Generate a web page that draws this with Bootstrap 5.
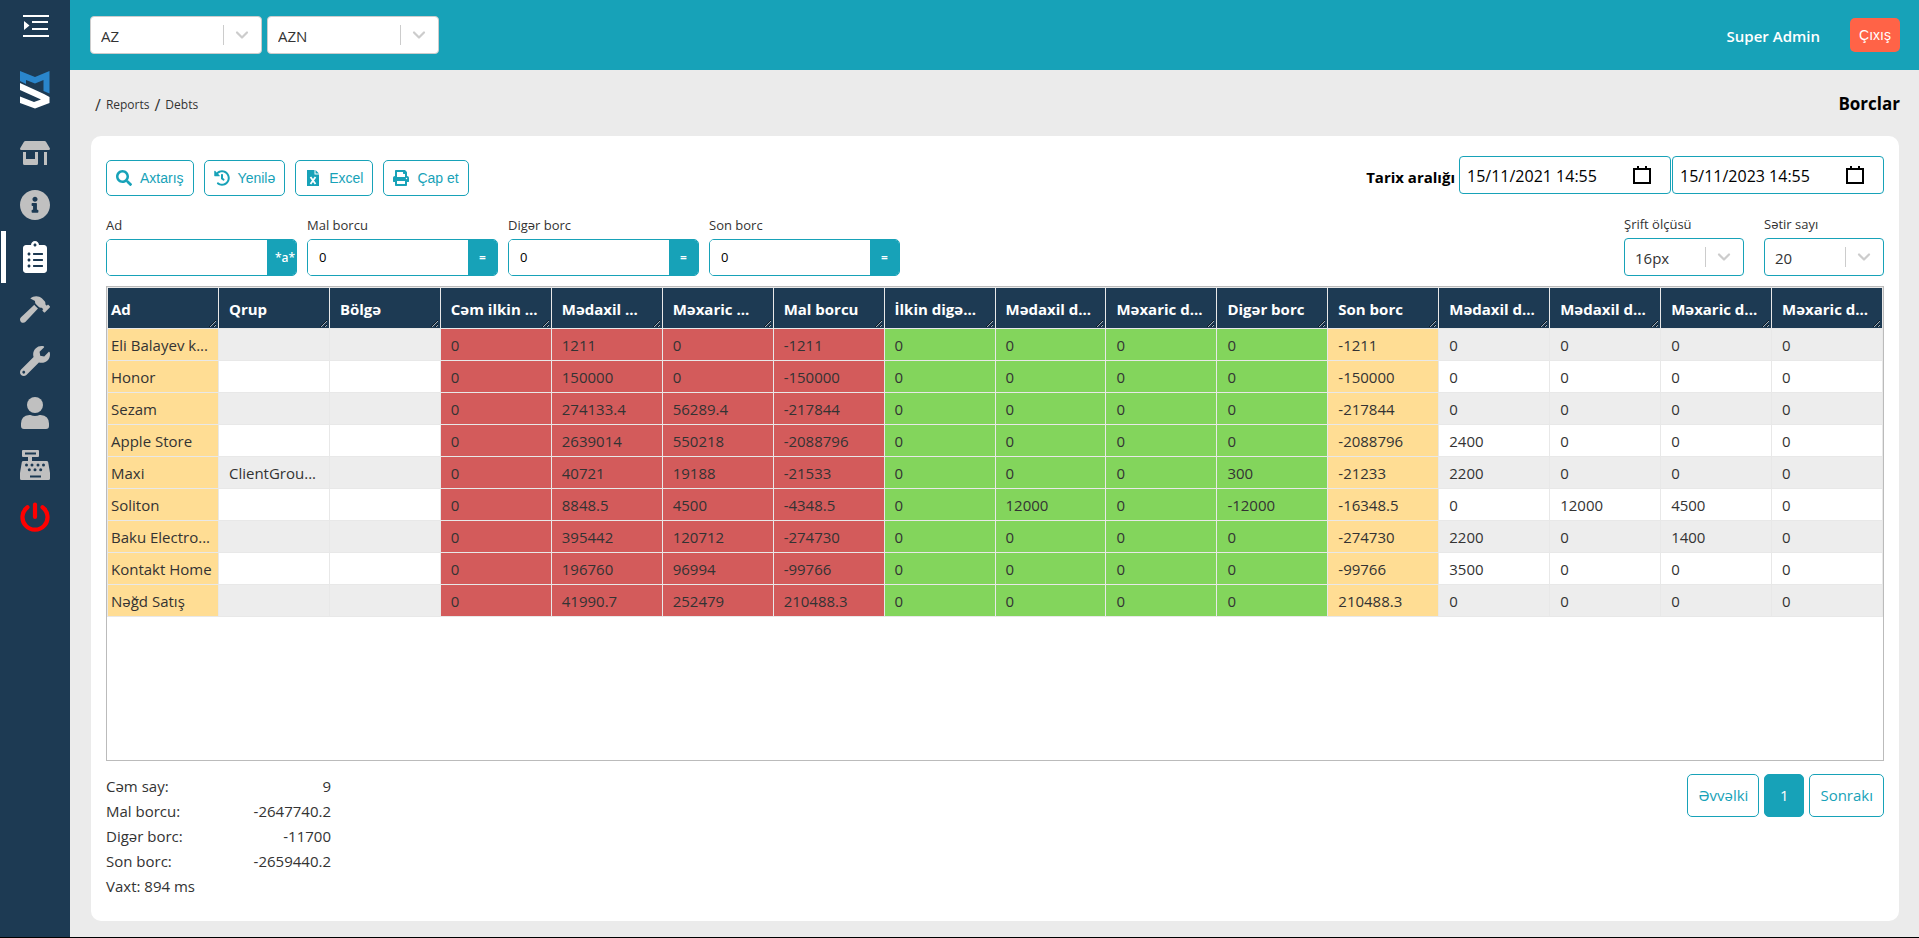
<!DOCTYPE html>
<html lang="az">
<head>
<meta charset="utf-8">
<meta name="viewport" content="width=device-width, initial-scale=1">
<title>Borclar</title>
<link href="https://cdn.jsdelivr.net/npm/bootstrap@5.3.0/dist/css/bootstrap.min.css" rel="stylesheet">
<style>
  :root { --teal: #17a2b8; --navy: #1d3a53; }
  body { background: #ebebeb; color: #333; font-family: "Open Sans", "Noto Sans", sans-serif; font-size: 15px; }
  a { text-decoration: none; color: inherit; }
  .shell { border-bottom: 1px solid #000; }
  .work { min-width: 0; }

  .side { width: 70px; background: var(--navy); color: #c0c0c0; }
  .side-toggle { height: 53px; padding: 14px 0 0 2px; color: #fff; }
  .side-logo { height: 74px; padding-top: 18px; }
  .side-link { height: 52px; }
  .side-link.active { color: #fff; border-left: 5px solid #fff; margin-left: 1px; padding-right: 6px; }
  .side-link.power { color: red; }

  .topbar { height: 70px; background: var(--teal); padding: 0 19px 0 20px; }
  .user-name { color: #fff; font-weight: 600; font-size: 15px; margin-right: 30px; padding-top: 2px; }
  .btn-exit { background: #ff6347; color: #fff; font: 14px "Liberation Sans", Arial, sans-serif; height: 34px; width: 50px; border-radius: 5px; }

  .pick { appearance: none; height: 38px; color: #333; border: 1px solid #ccc; border-radius: 4px; padding: 2px 40px 0 10px; outline: 0;
    background: #fff url("data:image/svg+xml,%3Csvg xmlns='http://www.w3.org/2000/svg' width='38' height='36'%3E%3Cpath d='M.5 8v20' stroke='%23ccc'/%3E%3Cpath d='M14 15.500l5 5 5-5' fill='none' stroke='%23ccc' stroke-width='2.200' stroke-linecap='round' stroke-linejoin='round'/%3E%3C/svg%3E") no-repeat right center; }
  .topbar .pick { width: 172px; }
  .view-opts .pick { width: 120px; border-color: var(--teal); }

  .page-head { height: 66px; padding: 3px 19px 0 25px; }
  .crumbs { font-size: 12px; gap: 5px; }
  .crumbs .slash { font-size: 16px; }
  .page-title { font-size: 17px; font-weight: 700; color: #000; }

  .panel { background: #fff; border-radius: 10px; margin: 0 20px 16px 21px; padding: 20px 15px 22px; }
  .tools { height: 40px; }
  .btn-tool { --bs-btn-padding-x: 9px; --bs-btn-padding-y: 0; height: 36px; border: 1px solid var(--teal); color: var(--teal); border-radius: 5px; background: #fff; font: 14px "Liberation Sans", Arial, sans-serif; }
  .range-label { font-weight: 700; font-size: 15px; color: #000; padding-top: 5px; margin-right: 4px; }
  .date-box { width: 212px; height: 38px; border: 1px solid var(--teal); border-radius: 4px; padding: 0 19px 0 7px; margin-right: 1px; }
  .date-box input { border: 0; outline: 0; padding: 2px 0 0; color: #000; font-size: 16px; min-width: 0; }
  .date-box button { border: 0; background: none; padding: 0; line-height: 0; }

  .field-label { font-size: 13px; font-weight: 500; line-height: 18px; margin-bottom: 5px; }
  .filters { margin-top: 19px; }
  .filter { width: 191px; height: 37px; border: 1px solid var(--teal); border-radius: 5px; overflow: hidden; }
  .filter input { border: 0; outline: 0; padding: 0 11px; font-size: 13px; color: #000; min-width: 0; }
  .filter button { width: 29px; border: 0; background: var(--teal); color: #fff; font-size: 12px; font-weight: 600; padding: 0; text-align: center; flex: none; }
  .filter .mode-text { padding-left: 8px; text-align: left; }

  .grid-box { border: 1px solid #bbb; margin-top: 10px; overflow: hidden; }
  .grid-table { table-layout: fixed; width: 100%; border-collapse: collapse; font-size: 15px; }
  .grid-table th, .grid-table td { border: 1px solid #e8e8e8; padding: 0; }
  .grid-table td { height: 32px; padding: 2px 0 0 10px; white-space: nowrap; overflow: hidden; }
  .grid-table th { background: var(--navy); color: #fff; font-size: 15px; font-weight: 700; }
  .col-grip { height: 40px; line-height: 42px; padding-left: 10px; padding-right: 2px; resize: horizontal; overflow: hidden; white-space: nowrap; margin-right: 1px; }
  .grid-table td:first-child, .grid-table th:first-child .col-grip { padding-left: 3px; }
  .grid-table tbody tr:nth-child(odd) td { background: #ededed; }
  .grid-table tbody tr td:is(:nth-child(1), :nth-child(12)) { background: #ffdd94; }
  .grid-table tbody tr td:is(:nth-child(4), :nth-child(5), :nth-child(6), :nth-child(7)) { background: #d35b5b; }
  .grid-table tbody tr td:is(:nth-child(8), :nth-child(9), :nth-child(10), :nth-child(11)) { background: #83d55c; }

  .totals { width: 225px; line-height: 25px; }
  .foot { padding-top: 13px; }
  .btn-page { height: 43px; border: 1px solid var(--teal); border-radius: 5px; color: var(--teal); background: #fff; font-size: 15px; padding: 0 10px; }
  .btn-page.current { background: var(--teal); color: #fff; width: 40px; }
</style>
</head>
<body>
<div class="shell d-flex min-vh-100">
  <nav class="side flex-shrink-0 d-flex flex-column" aria-label="Menu">
    <a href="#" class="side-toggle d-flex justify-content-center align-items-start" aria-label="Menu">
      <svg width="26" height="23" viewBox="0 0 26 23" fill="currentColor"><path d="M0 1h26v2H0zM9 7h16v2H9zM9 14h16v2H9zM0 21h26v2H0zM1 7l5.500 4.500L1 16z"/></svg>
    </a>
    <a href="#" class="side-logo d-flex justify-content-center align-items-start" aria-label="Logo">
      <svg width="30" height="38" viewBox="0 0 30 38"><path d="M0 0l15 6 14.500-6v22.500l-6-2.500v-11L15 12.500 6 9v4L0 10z" fill="#2a86cc"/><path d="M0 12l24 11 5.500 3v6L15 37.500 0 32v-6.500l14 5.500 7-2.500L0 19z" fill="#fff"/></svg>
    </a>
    <a href="#" class="side-link d-flex justify-content-center align-items-center" aria-label="Store">
      <svg width="30" height="24" viewBox="0 0 30 24" fill="currentColor"><path d="M5.500 0h19q1 0 1.500.8L29.700 7q.8 2-1 2H1.300Q-.5 9 .3 7L4 .8Q4.500 0 5.500 0zM3 11h3v7h9v-7h3v11.500q0 1.500-1.500 1.500h-12Q3 24 3 22.500zM24 11h3v13h-3z"/></svg>
    </a>
    <a href="#" class="side-link d-flex justify-content-center align-items-center" aria-label="Info">
      <svg width="30" height="30" viewBox="8 8 496 496" fill="currentColor"><path d="M256 8C119.043 8 8 119.083 8 256c0 136.997 111.043 248 248 248s248-111.003 248-248C504 119.083 392.957 8 256 8zm0 110c23.196 0 42 18.804 42 42s-18.804 42-42 42-42-18.804-42-42 18.804-42 42-42zm56 254c0 6.627-5.373 12-12 12h-88c-6.627 0-12-5.373-12-12v-24c0-6.627 5.373-12 12-12h12v-64h-12c-6.627 0-12-5.373-12-12v-24c0-6.627 5.373-12 12-12h64c6.627 0 12 5.373 12 12v100h12c6.627 0 12 5.373 12 12v24z"/></svg>
    </a>
    <a href="#" class="side-link active d-flex justify-content-center align-items-center" aria-label="Reports">
      <svg width="24" height="32" viewBox="0 0 384 512" fill="currentColor"><path d="M336 64h-80c0-35.300-28.700-64-64-64s-64 28.700-64 64H48C21.500 64 0 85.500 0 112v352c0 26.500 21.500 48 48 48h288c26.500 0 48-21.500 48-48V112c0-26.500-21.500-48-48-48zM96 424c-13.300 0-24-10.700-24-24s10.700-24 24-24 24 10.700 24 24-10.700 24-24 24zm0-96c-13.300 0-24-10.700-24-24s10.700-24 24-24 24 10.700 24 24-10.700 24-24 24zm0-96c-13.300 0-24-10.700-24-24s10.700-24 24-24 24 10.700 24 24-10.700 24-24 24zm96-192c13.300 0 24 10.700 24 24s-10.700 24-24 24-24-10.700-24-24 10.700-24 24-24zm128 368c0 4.400-3.600 8-8 8H168c-4.400 0-8-3.600-8-8v-16c0-4.400 3.600-8 8-8h144c4.400 0 8 3.600 8 8v16zm0-96c0 4.400-3.600 8-8 8H168c-4.400 0-8-3.600-8-8v-16c0-4.400 3.600-8 8-8h144c4.400 0 8 3.600 8 8v16zm0-96c0 4.400-3.600 8-8 8H168c-4.400 0-8-3.600-8-8v-16c0-4.400 3.600-8 8-8h144c4.400 0 8 3.600 8 8v16z"/></svg>
    </a>
    <a href="#" class="side-link d-flex justify-content-center align-items-center" aria-label="Tools">
      <svg width="30" height="27" viewBox="0 0 576 512" fill="currentColor"><path d="M571.310 193.940l-22.630-22.630c-6.250-6.250-16.380-6.250-22.630 0l-11.310 11.310-28.900-28.900c5.630-21.310.36-44.900-16.350-61.610l-45.250-45.250c-62.480-62.480-163.790-62.480-226.280 0l90.510 45.250v18.750c0 16.970 6.740 33.250 18.750 45.250l49.140 49.140c16.710 16.710 40.300 21.980 61.610 16.350l28.900 28.900-11.310 11.310c-6.250 6.250-6.250 16.380 0 22.630l22.630 22.630c6.250 6.250 16.380 6.250 22.630 0l90.510-90.510c6.230-6.240 6.230-16.370-.02-22.620zm-286.720-15.200c-3.700-3.700-6.840-7.790-9.850-11.950L19.640 404.960c-25.570 23.880-26.260 64.190-1.530 88.930s65.050 24.050 88.920-1.530l238.130-255.070c-3.960-2.910-7.900-5.870-11.440-9.410l-49.130-49.140z"/></svg>
    </a>
    <a href="#" class="side-link d-flex justify-content-center align-items-center" aria-label="Service">
      <svg width="30" height="30" viewBox="0 0 512 512" fill="currentColor"><path d="M507.730 109.100c-2.240-9.030-13.540-12.090-20.120-5.510l-74.360 74.360-67.880-11.310-11.310-67.880 74.360-74.360c6.620-6.620 3.430-17.900-5.660-20.160-47.380-11.740-99.550.91-136.580 37.930-39.640 39.640-50.550 97.100-34.050 147.200L18.740 402.760c-24.990 24.990-24.990 65.510 0 90.500 24.990 24.990 65.510 24.990 90.500 0l213.210-213.210c50.120 16.710 107.470 5.680 147.370-34.220 37.070-37.070 49.700-89.320 37.910-136.730zM64 472c-13.250 0-24-10.750-24-24 0-13.260 10.750-24 24-24s24 10.740 24 24c0 13.250-10.750 24-24 24z"/></svg>
    </a>
    <a href="#" class="side-link d-flex justify-content-center align-items-center" aria-label="User">
      <svg width="28" height="32" viewBox="0 0 28 32" fill="currentColor"><circle cx="14" cy="8" r="8"/><path d="M8.400 18h1q4.600 2 9.200 0h1q8.400.8 8.400 8.600V29q0 3-3 3H3q-3 0-3-3v-2.400Q0 18.800 8.400 18z"/></svg>
    </a>
    <a href="#" class="side-link d-flex justify-content-center align-items-center" aria-label="Cash register">
      <svg width="30" height="30" viewBox="0 0 30 30" fill="currentColor"><path fill-rule="evenodd" d="M3 0h15q1 0 1 1v5q0 1-1 1h-6v4h14.500q1.500 0 1.700 1.300L30 23v5.500q0 1.500-1.500 1.500h-27Q0 30 0 28.500V23l1.800-10.700Q2 11 3.500 11H8V7H3Q2 7 2 6V1q0-1 1-1zm2 2.500v2h11v-2zM10 25.500v2h11v-2z"/><g fill="#1d3a53"><circle cx="6.500" cy="15" r="1.500"/><circle cx="12" cy="15" r="1.500"/><circle cx="18" cy="15" r="1.500"/><circle cx="23.500" cy="15" r="1.500"/><circle cx="9.300" cy="19.700" r="1.500"/><circle cx="15" cy="19.700" r="1.500"/><circle cx="20.700" cy="19.700" r="1.500"/></g></svg>
    </a>
    <a href="#" class="side-link power d-flex justify-content-center align-items-center" aria-label="Log out">
      <svg width="30" height="30" viewBox="0 0 30 30" fill="none" stroke="currentColor" stroke-width="4.200" stroke-linecap="round"><path d="M7.500 5.200a12.500 12.500 0 1 0 15 0M15 2.500v12.500"/></svg>
    </a>
  </nav>

  <div class="work flex-grow-1 d-flex flex-column">
    <header class="topbar d-flex align-items-center">
      <div class="d-flex flex-grow-1" style="gap:5px">
        <select class="pick" aria-label="Dil"><option>AZ</option></select>
        <select class="pick" aria-label="Valyuta"><option>AZN</option></select>
      </div>
      <span class="user-name">Super Admin</span>
      <button type="button" class="btn btn-exit p-0">Çıxış</button>
    </header>

    <div class="page-head d-flex justify-content-between align-items-center flex-shrink-0">
      <nav class="crumbs d-flex align-items-center" aria-label="breadcrumb">
        <span class="slash">/</span><a href="#">Reports</a><span class="slash">/</span><a href="#">Debts</a>
      </nav>
      <h1 class="page-title m-0">Borclar</h1>
    </div>

    <main class="panel flex-grow-1 d-flex flex-column">
      <div class="tools d-flex justify-content-between">
        <div class="d-flex align-items-end" style="gap:10px">
          <button type="button" class="btn btn-tool d-flex align-items-center gap-2">
            <svg width="16" height="16" viewBox="0 0 512 512" fill="currentColor"><path d="M505 442.700L405.300 343c-4.500-4.500-10.600-7-17-7H372c27.600-35.300 44-79.700 44-128C416 93.100 322.900 0 208 0S0 93.100 0 208s93.100 208 208 208c48.300 0 92.700-16.400 128-44v16.300c0 6.400 2.500 12.500 7 17l99.700 99.700c9.400 9.400 24.600 9.400 33.900 0l28.300-28.300c9.400-9.400 9.400-24.600.1-34zM208 336c-70.700 0-128-57.200-128-128 0-70.700 57.200-128 128-128 70.700 0 128 57.200 128 128 0 70.700-57.200 128-128 128z"/></svg>Axtarış</button>
          <button type="button" class="btn btn-tool d-flex align-items-center gap-2">
            <svg width="16" height="16" viewBox="0 0 512 512" fill="currentColor"><path d="M504 255.531c.253 136.640-111.180 248.372-247.820 248.468-59.015.042-113.223-20.530-155.822-54.911-11.077-8.940-11.905-25.541-1.839-35.607l11.267-11.267c8.609-8.609 22.353-9.551 31.891-1.984C173.062 425.135 212.781 440 256 440c101.705 0 184-82.311 184-184 0-101.705-82.311-184-184-184-48.814 0-93.149 18.969-126.068 49.932l50.754 50.754c10.080 10.080 2.941 27.314-11.313 27.314H24c-8.837 0-16-7.163-16-16V38.627c0-14.254 17.234-21.393 27.314-11.314l49.372 49.372C129.209 34.136 189.552 8 256 8c136.810 0 247.747 110.780 248 247.531zm-180.912 78.784l9.823-12.630c8.138-10.463 6.253-25.542-4.210-33.679L288 256.349V152c0-13.255-10.745-24-24-24h-16c-13.255 0-24 10.745-24 24v135.651l65.409 50.874c10.463 8.137 25.541 6.253 33.679-4.210z"/></svg>Yenilə</button>
          <button type="button" class="btn btn-tool d-flex align-items-center gap-2">
            <svg width="16" height="16" viewBox="0 0 16 16"><path fill="currentColor" d="M2 0h7.500v4.500H14V16H2zM10.500 0L14 3.500h-3.500z"/><path d="M5.500 7l5 7M10.500 7l-5 7" stroke="#fff" stroke-width="1.800"/></svg>Excel</button>
          <button type="button" class="btn btn-tool d-flex align-items-center gap-2">
            <svg width="16" height="16" viewBox="0 0 512 512" fill="currentColor"><path d="M448 192V77.250c0-8.490-3.370-16.620-9.370-22.630L393.370 9.370c-6-6-14.140-9.370-22.630-9.370H96C78.330 0 64 14.330 64 32v160c-35.350 0-64 28.650-64 64v112c0 8.840 7.160 16 16 16h48v96c0 17.670 14.330 32 32 32h320c17.670 0 32-14.330 32-32v-96h48c8.840 0 16-7.160 16-16V256c0-35.350-28.650-64-64-64zm-64 256H128v-96h256v96zm0-224H128V64h192v48c0 8.840 7.160 16 16 16h48v96zm48 72c-13.250 0-24-10.750-24-24 0-13.260 10.750-24 24-24s24 10.740 24 24c0 13.250-10.750 24-24 24z"/></svg>Çap et</button>
        </div>
        <div class="d-flex align-items-start">
          <div class="d-flex align-items-center">
            <label class="range-label" for="from">Tarix aralığı</label>
            <div class="date-box d-flex align-items-center">
              <input id="from" class="flex-grow-1" type="text" value="15/11/2021 14:55">
              <button type="button" aria-label="Təqvim"><svg width="18" height="18" viewBox="0 0 18 18"><path d="M0 2h18v16H0zM2 4v12h14V4z" fill="#000" fill-rule="evenodd"/><path d="M4 0h2v3H4zM12 0h2v3h-2z"/></svg></button>
            </div>
            <div class="date-box d-flex align-items-center me-0">
              <input class="flex-grow-1" type="text" value="15/11/2023 14:55" aria-label="Son tarix">
              <button type="button" aria-label="Təqvim"><svg width="18" height="18" viewBox="0 0 18 18"><path d="M0 2h18v16H0zM2 4v12h14V4z" fill="#000" fill-rule="evenodd"/><path d="M4 0h2v3H4zM12 0h2v3h-2z"/></svg></button>
            </div>
          </div>
        </div>
      </div>

      <div class="filters d-flex justify-content-between align-items-end">
        <div class="d-flex" style="gap:10px">
          <div><label class="field-label d-block" for="f1">Ad</label><div class="filter d-flex"><input id="f1" class="flex-grow-1" type="text"><button type="button" class="mode-text">*a*</button></div></div>
          <div><label class="field-label d-block" for="f2">Mal borcu</label><div class="filter d-flex"><input id="f2" class="flex-grow-1" type="text" value="0"><button type="button">=</button></div></div>
          <div><label class="field-label d-block" for="f3">Digər borc</label><div class="filter d-flex"><input id="f3" class="flex-grow-1" type="text" value="0"><button type="button">=</button></div></div>
          <div><label class="field-label d-block" for="f4">Son borc</label><div class="filter d-flex"><input id="f4" class="flex-grow-1" type="text" value="0"><button type="button">=</button></div></div>
        </div>
        <div class="view-opts d-flex" style="gap:20px">
          <div><label class="field-label d-block" for="fs">Şrift ölçüsü</label><select id="fs" class="pick d-block"><option>16px</option></select></div>
          <div><label class="field-label d-block" for="rc">Sətir sayı</label><select id="rc" class="pick d-block"><option>20</option></select></div>
        </div>
      </div>

      <div class="grid-box flex-grow-1">
        <table class="grid-table">
          <thead><tr>
            <th><div class="col-grip">Ad</div></th><th><div class="col-grip">Qrup</div></th><th><div class="col-grip">Bölgə</div></th><th><div class="col-grip">Cəm ilkin ...</div></th>
            <th><div class="col-grip">Mədaxil ...</div></th><th><div class="col-grip">Məxaric ...</div></th><th><div class="col-grip">Mal borcu</div></th><th><div class="col-grip">İlkin digə...</div></th>
            <th><div class="col-grip">Mədaxil d...</div></th><th><div class="col-grip">Məxaric d...</div></th><th><div class="col-grip">Digər borc</div></th><th><div class="col-grip">Son borc</div></th>
            <th><div class="col-grip">Mədaxil d...</div></th><th><div class="col-grip">Mədaxil d...</div></th><th><div class="col-grip">Məxaric d...</div></th><th><div class="col-grip">Məxaric d...</div></th>
          </tr></thead>
          <tbody>
            <tr><td>Eli Balayev k...</td><td></td><td></td><td>0</td><td>1211</td><td>0</td><td>-1211</td><td>0</td><td>0</td><td>0</td><td>0</td><td>-1211</td><td>0</td><td>0</td><td>0</td><td>0</td></tr>
            <tr><td>Honor</td><td></td><td></td><td>0</td><td>150000</td><td>0</td><td>-150000</td><td>0</td><td>0</td><td>0</td><td>0</td><td>-150000</td><td>0</td><td>0</td><td>0</td><td>0</td></tr>
            <tr><td>Sezam</td><td></td><td></td><td>0</td><td>274133.4</td><td>56289.4</td><td>-217844</td><td>0</td><td>0</td><td>0</td><td>0</td><td>-217844</td><td>0</td><td>0</td><td>0</td><td>0</td></tr>
            <tr><td>Apple Store</td><td></td><td></td><td>0</td><td>2639014</td><td>550218</td><td>-2088796</td><td>0</td><td>0</td><td>0</td><td>0</td><td>-2088796</td><td>2400</td><td>0</td><td>0</td><td>0</td></tr>
            <tr><td>Maxi</td><td>ClientGrou...</td><td></td><td>0</td><td>40721</td><td>19188</td><td>-21533</td><td>0</td><td>0</td><td>0</td><td>300</td><td>-21233</td><td>2200</td><td>0</td><td>0</td><td>0</td></tr>
            <tr><td>Soliton</td><td></td><td></td><td>0</td><td>8848.5</td><td>4500</td><td>-4348.5</td><td>0</td><td>12000</td><td>0</td><td>-12000</td><td>-16348.5</td><td>0</td><td>12000</td><td>4500</td><td>0</td></tr>
            <tr><td>Baku Electro...</td><td></td><td></td><td>0</td><td>395442</td><td>120712</td><td>-274730</td><td>0</td><td>0</td><td>0</td><td>0</td><td>-274730</td><td>2200</td><td>0</td><td>1400</td><td>0</td></tr>
            <tr><td>Kontakt Home</td><td></td><td></td><td>0</td><td>196760</td><td>96994</td><td>-99766</td><td>0</td><td>0</td><td>0</td><td>0</td><td>-99766</td><td>3500</td><td>0</td><td>0</td><td>0</td></tr>
            <tr><td>Nəğd Satış</td><td></td><td></td><td>0</td><td>41990.7</td><td>252479</td><td>210488.3</td><td>0</td><td>0</td><td>0</td><td>0</td><td>210488.3</td><td>0</td><td>0</td><td>0</td><td>0</td></tr>
          </tbody>
        </table>
      </div>

      <div class="foot d-flex justify-content-between align-items-start">
        <div class="totals">
          <div class="d-flex justify-content-between"><span>Cəm say:</span><span>9</span></div>
          <div class="d-flex justify-content-between"><span>Mal borcu:</span><span>-2647740.2</span></div>
          <div class="d-flex justify-content-between"><span>Digər borc:</span><span>-11700</span></div>
          <div class="d-flex justify-content-between"><span>Son borc:</span><span>-2659440.2</span></div>
          <div>Vaxt: 894 ms</div>
        </div>
        <div class="d-flex" style="gap:5px">
          <button type="button" class="btn btn-page">Əvvəlki</button>
          <button type="button" class="btn btn-page current">1</button>
          <button type="button" class="btn btn-page">Sonrakı</button>
        </div>
      </div>
    </main>
  </div>
</div>
<script src="https://cdn.jsdelivr.net/npm/bootstrap@5.3.0/dist/js/bootstrap.bundle.min.js"></script>
</body>
</html>
